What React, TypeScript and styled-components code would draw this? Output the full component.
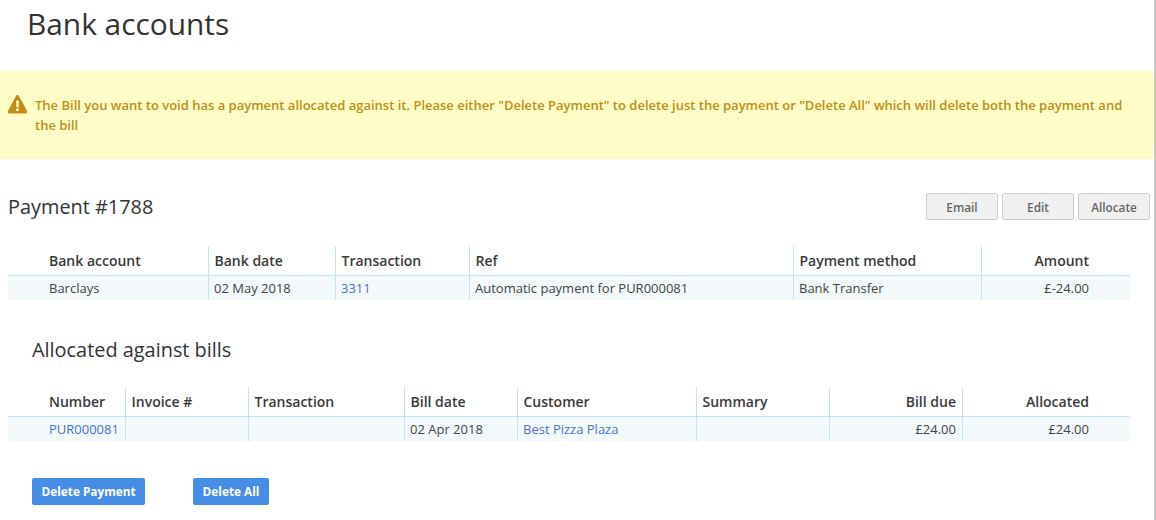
import styled, { createGlobalStyle } from "styled-components";

const GlobalStyle = createGlobalStyle`
	html, body {
		margin: 0;
		padding: 0;
		background: #fff;
	}
	body {
		font-family: "Open Sans", "Liberation Sans", sans-serif;
		color: #333;
	}
`;

const Page = styled.div`
	box-sizing: border-box;
	width: 1156px;
	height: 520px;
	border-right: 2px solid #ccc;
	overflow: hidden;
`;

const Title = styled.h1`
	margin: 0;
	padding: 0 0 0 27px;
	height: 71px;
	font-size: 29.85px;
	line-height: 47px;
	font-weight: 400;
	color: #333;
`;

const Banner = styled.div`
	box-sizing: border-box;
	height: 88px;
	padding: 24px 24px 0 7px;
	display: flex;
	gap: 7px;
	background: #fffcc6;
	color: #c08e17;
	font-size: 13px;
	font-weight: 600;
	line-height: 20px;
`;

const WarnIcon = styled.svg`
	flex: none;
	width: 21px;
	height: 20px;
	margin-top: -1px;
`;

const PaymentHead = styled.div`
	display: flex;
	align-items: center;
	justify-content: space-between;
	padding: 34px 4px 0 8px;
`;

const Heading = styled.h2`
	margin: 0;
	font-size: 19.9px;
	line-height: 27px;
	font-weight: 400;
	color: #333;
`;

const Actions = styled.div`
	display: flex;
	gap: 4px;
`;

const GreyButton = styled.button`
	box-sizing: border-box;
	width: 72px;
	height: 27px;
	padding: 0;
	border: 1px solid #ccc;
	border-radius: 2px;
	background: #f0f0f0;
	color: #666;
	font-family: inherit;
	font-size: 11.8px;
	font-weight: 600;
`;

const Table = styled.table<{ $top: number }>`
	width: 1122px;
	margin: ${(p) => p.$top}px 0 0 8px;
	border-collapse: separate;
	border-spacing: 0;
	table-layout: fixed;
	font-size: 13px;
`;

const Th = styled.th<{ $right?: boolean; $first?: boolean; $last?: boolean }>`
	box-sizing: border-box;
	height: 30px;
	padding: 0 ${(p) => (p.$last ? 41 : 6)}px 0 ${(p) => (p.$first ? 41 : 5.5)}px;
	border-right: ${(p) => (p.$last ? "none" : "1px solid #bfe6f7")};
	border-bottom: 1px solid #bfe6f7;
	text-align: ${(p) => (p.$right ? "right" : "left")};
	font-size: 14px;
	font-weight: 600;
	color: #3a3a3a;
	white-space: nowrap;
`;

const Td = styled.td<{ $right?: boolean; $first?: boolean; $last?: boolean }>`
	box-sizing: border-box;
	height: 24px;
	padding: 0 ${(p) => (p.$last ? 41 : 6)}px 0 ${(p) => (p.$first ? 41 : 5)}px;
	border-right: ${(p) => (p.$last ? "none" : "1px solid #bfe6f7")};
	background: #f3f8fb;
	text-align: ${(p) => (p.$right ? "right" : "left")};
	color: #444;
	white-space: nowrap;
`;

const RowLink = styled.a`
	color: #4a74d0;
	text-decoration: none;
`;

const SubHeading = styled(Heading)`
	padding: 36px 0 0 32px;
`;

const Footer = styled.div`
	display: flex;
	gap: 48px;
	padding: 37px 0 0 32px;
`;

const BlueButton = styled.button`
	height: 27px;
	padding: 0 9.5px 1px;
	border: none;
	border-radius: 2px;
	background: #468ee5;
	color: #fff;
	font-family: inherit;
	font-size: 11.8px;
	font-weight: 700;
`;

interface IColumn {
	label: string;
	width: number;
	right?: boolean;
}

const paymentColumns: IColumn[] = [
	{ label: "Bank account", width: 201 },
	{ label: "Bank date", width: 127 },
	{ label: "Transaction", width: 134 },
	{ label: "Ref", width: 324 },
	{ label: "Payment method", width: 188 },
	{ label: "Amount", width: 148, right: true },
];

const billColumns: IColumn[] = [
	{ label: "Number", width: 118 },
	{ label: "Invoice #", width: 123 },
	{ label: "Transaction", width: 156 },
	{ label: "Bill date", width: 113 },
	{ label: "Customer", width: 179 },
	{ label: "Summary", width: 133 },
	{ label: "Bill due", width: 133, right: true },
	{ label: "Allocated", width: 167, right: true },
];

function DataTable({ columns, cells, top }: { columns: IColumn[]; cells: React.ReactNode[]; top: number }) {
	return (
		<Table $top={top}>
			<colgroup>
				{columns.map((col) => (
					<col key={col.label} style={{ width: col.width }} />
				))}
			</colgroup>
			<thead>
				<tr>
					{columns.map((col, i) => (
						<Th key={col.label} $right={col.right} $first={i === 0} $last={i === columns.length - 1}>
							{col.label}
						</Th>
					))}
				</tr>
			</thead>
			<tbody>
				<tr>
					{columns.map((col, i) => (
						<Td key={col.label} $right={col.right} $first={i === 0} $last={i === columns.length - 1}>
							{cells[i]}
						</Td>
					))}
				</tr>
			</tbody>
		</Table>
	);
}

function App() {
	return (
		<Page>
			<GlobalStyle />
			<Title>Bank accounts</Title>
			<Banner>
				<WarnIcon viewBox="0 0 21 20">
					<path
						fill="#c08e17"
						fillRule="evenodd"
						d="M10.5 1c.6 0 1.1.3 1.4.8l8.2 15.2c.6 1.1-.2 2.4-1.4 2.4H2.3C1.100 19.400.3 18.100.9 17L9.100 1.800c.3-.5.8-.8 1.400-.8zM9.100 6.500l.3 6.800h2.200l.3-6.800zM9.200 14.600v2.500h2.600v-2.500z"
					/>
				</WarnIcon>
				<span>
					The Bill you want to void has a payment allocated against it. Please either "Delete Payment" to delete just
					the payment or "Delete All" which will delete both the payment and the bill
				</span>
			</Banner>
			<PaymentHead>
				<Heading>Payment #1788</Heading>
				<Actions>
					<GreyButton>Email</GreyButton>
					<GreyButton>Edit</GreyButton>
					<GreyButton>Allocate</GreyButton>
				</Actions>
			</PaymentHead>
			<DataTable
				top={26}
				columns={paymentColumns}
				cells={[
					"Barclays",
					"02 May 2018",
					<RowLink href="#">3311</RowLink>,
					"Automatic payment for PUR000081",
					"Bank Transfer",
					"£-24.00",
				]}
			/>
			<SubHeading>Allocated against bills</SubHeading>
			<DataTable
				top={24}
				columns={billColumns}
				cells={[
					<RowLink href="#">PUR000081</RowLink>,
					"",
					"",
					"02 Apr 2018",
					<RowLink href="#">Best Pizza Plaza</RowLink>,
					"",
					"£24.00",
					"£24.00",
				]}
			/>
			<Footer>
				<BlueButton>Delete Payment</BlueButton>
				<BlueButton>Delete All</BlueButton>
			</Footer>
		</Page>
	);
}

export default App;
